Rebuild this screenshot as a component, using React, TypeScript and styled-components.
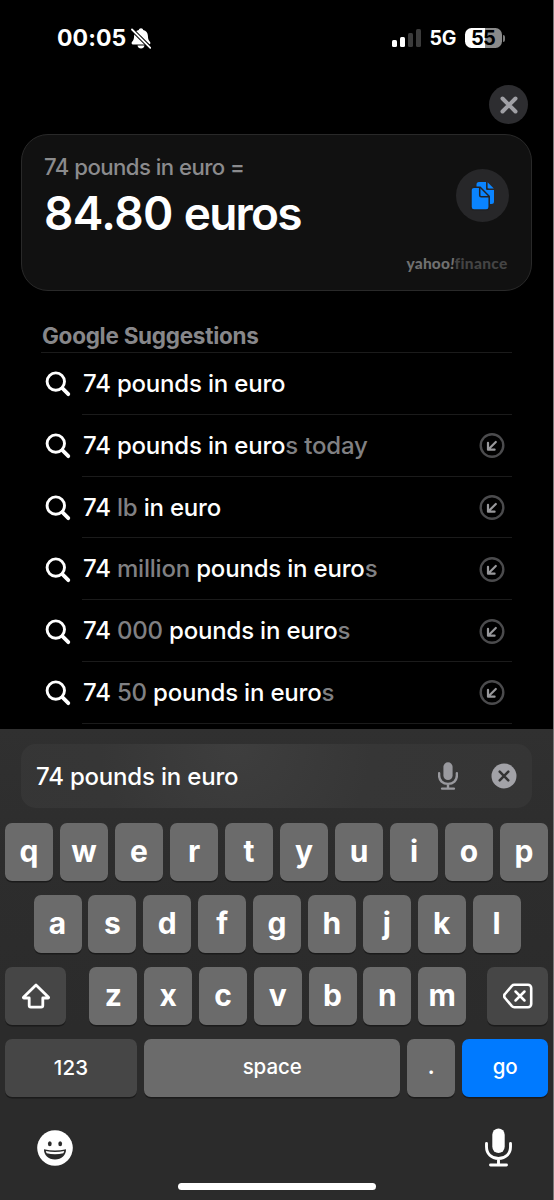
import React from "react";
import styled, { createGlobalStyle } from "styled-components";

const GlobalStyle = createGlobalStyle`
  * { box-sizing: border-box; }
  body { margin: 0; background: #000; }
`;

const Screen = styled.main`
  display: flex;
  flex-direction: column;
  width: 554px;
  height: 1200px;
  overflow: hidden;
  background: #000;
  color: #fff;
  border-right: 1px solid #777;
  font-family: Inter, "Liberation Sans", sans-serif;
  svg { display: block; flex: none; }
`;

const Label = styled.span<{ $size: number; $weight?: number; $spacing?: number; $color?: string }>`
  font-size: ${(p) => p.$size}px;
  font-weight: ${(p) => p.$weight ?? 500};
  letter-spacing: ${(p) => p.$spacing ?? 0}px;
  color: ${(p) => p.$color ?? "#fff"};
  line-height: 1.2;
  white-space: pre;
`;

const StatusBar = styled.header`
  display: flex;
  align-items: center;
  justify-content: space-between;
  height: 76px;
  padding: 1px 48px 0 57px;
`;

const StatusGroup = styled.div<{ $gap: number }>`
  display: flex;
  align-items: center;
  gap: ${(p) => p.$gap}px;
`;

const Signal = styled.div`
  display: flex;
  align-items: flex-end;
  gap: 3px;
  height: 18px;
`;

const SignalBar = styled.i<{ $height: number; $on?: boolean }>`
  width: 5px;
  height: ${(p) => p.$height}px;
  border-radius: 1.5px;
  background: ${(p) => (p.$on ? "#fff" : "#3b3b3b")};
`;

const Battery = styled.div`
  display: flex;
  align-items: center;
  gap: 1px;
`;

const BatteryBody = styled.div`
  display: flex;
  align-items: center;
  justify-content: center;
  width: 37px;
  height: 20px;
  border-radius: 6.5px;
  background: linear-gradient(90deg, #fff 55%, #8a8a8a 55%);
`;

const BatteryTip = styled.i`
  width: 2.5px;
  height: 7px;
  border-radius: 0 3px 3px 0;
  background: #7c7c7c;
`;

const CloseRow = styled.div`
  display: flex;
  justify-content: flex-end;
  height: 58px;
  padding: 9px 25px 0 0;
`;

const RoundButton = styled.button<{ $size: number; $bg: string }>`
  display: flex;
  align-items: center;
  justify-content: center;
  width: ${(p) => p.$size}px;
  height: ${(p) => p.$size}px;
  padding: 0;
  border: 0;
  border-radius: 50%;
  background: ${(p) => p.$bg};
`;

const ResultCard = styled.section`
  display: flex;
  justify-content: space-between;
  height: 157px;
  margin: 0 21px;
  padding: 18.5px 22px 0 22px;
  border: 1.5px solid #292929;
  border-radius: 27px;
  background: #111;
`;

const ResultText = styled.div`
  display: flex;
  flex-direction: column;
  gap: 6px;
`;

const ResultSide = styled.div`
  display: flex;
  flex-direction: column;
  align-items: flex-end;
  gap: 31.5px;
  padding-top: 15.5px;
`;

const Attribution = styled.div`
  display: flex;
  align-items: baseline;
  height: 20px;
  margin-right: 1.5px;
  span { font-family: Lato, Inter, sans-serif; font-weight: 900; }
  em { font-style: italic; }
`;

const Suggestions = styled.section`
  display: flex;
  flex-direction: column;
  height: 438px;
  padding: 31px 41px 0 41px;
`;

const SuggestionsHeader = styled.div`
  display: flex;
  height: 31px;
  flex: none;
  padding-left: 1px;
  border-bottom: 1px solid #1b1b1b;
`;

const SuggestionRow = styled.div`
  display: flex;
  flex: none;
  height: 61.8px;
`;

const SearchCell = styled.div`
  display: flex;
  align-items: center;
  width: 41px;
  padding: 1px 0 0 4px;
`;

const SuggestionBody = styled.div`
  display: flex;
  flex: 1;
  align-items: center;
  justify-content: space-between;
  padding: 2px 7px 0 1px;
  border-bottom: 1px solid #1b1b1b;
`;

const Muted = styled.span`
  color: #808083;
`;

const KeyboardPanel = styled.section`
  display: flex;
  flex-direction: column;
  flex: 1;
  background: linear-gradient(180deg, #303030 0, #2d2d2d 130px, #2b2b2b 300px);
`;

const SearchField = styled.div`
  display: flex;
  flex: none;
  align-items: center;
  height: 64px;
  margin: 15px 21px 15px 21px;
  padding: 0 15px;
  border-radius: 15px;
  background: radial-gradient(circle at 42% 0, #3e3e3e 0, #363636 45%, #353535 100%);
`;

const FieldText = styled.div`
  flex: 1;
  padding-top: 2px;
`;

const ClearSlot = styled.div`
  margin-left: 33.5px;
`;

const Keys = styled.div`
  display: flex;
  flex-direction: column;
  gap: 14px;
  padding: 0 5px;
`;

const KeyRow = styled.div<{ $inset?: number; $between?: boolean }>`
  display: flex;
  gap: 6.9px;
  justify-content: ${(p) => (p.$between ? "space-between" : "flex-start")};
  padding: 0 ${(p) => p.$inset ?? 0}px;
`;

const KeyGroup = styled.div`
  display: flex;
  gap: 6.8px;
  padding-left: 2.5px;
`;

const Key = styled.button<{ $width?: number; $tone?: "dark" | "blue"; $lift?: number }>`
  display: flex;
  flex: none;
  align-items: center;
  justify-content: center;
  width: ${(p) => p.$width ?? 48}px;
  height: 58px;
  padding: 0 0 ${(p) => p.$lift ?? 0}px;
  border: 0;
  border-radius: 7px;
  font-family: inherit;
  background: ${(p) => (p.$tone === "dark" ? "#464646" : p.$tone === "blue" ? "#007aff" : "#6b6b6b")};
  box-shadow: 0 1.5px 0 #1b1b1b;
`;

const BottomBar = styled.div`
  display: flex;
  align-items: flex-start;
  justify-content: space-between;
  height: 86px;
  padding: 31px 41px 0 37px;
`;

const EmojiSlot = styled.div`
  padding-top: 2px;
`;

const HomeIndicator = styled.div`
  flex: none;
  width: 198px;
  height: 7px;
  margin: 0 0 0 178px;
  border-radius: 4px;
  background: #fff;
`;

const BellOff = () => (
  <svg width="20" height="21" viewBox="0 0 20 21">
    <path d="M10 .3c1.200 0 2 .7 2.200 1.700 2.900.8 4.600 2.900 4.700 5.700.1 3.400.7 4.500 2 6 .9.900.6 2.700-.9 2.700H2c-1.500 0-1.800-1.800-.9-2.700 1.300-1.500 1.900-2.600 2-6C3.200 4.900 4.900 2.800 7.800 2 8 1 8.800.3 10 .3Z" fill="#fff" />
    <path d="M6.500 17.500h7c-.3 1.900-1.700 3-3.500 3s-3.200-1.100-3.500-3Z" fill="#fff" />
    <path d="M1 1.500 19.300 19.800" stroke="#000" strokeWidth="3.800" />
    <path d="M1 1.500 19.300 19.800" stroke="#fff" strokeWidth="1.800" strokeLinecap="round" />
  </svg>
);

const CloseIcon = () => (
  <svg width="18" height="18" viewBox="0 0 18 18">
    <path d="m2.500 2.500 13 13M15.500 2.500 2.500 15.500" stroke="#a0a0a5" strokeWidth="4" strokeLinecap="round" />
  </svg>
);

const CopyIcon = () => (
  <svg width="26" height="30" viewBox="0 0 26 30">
    <path d="M9 1h7v6.500c0 1 .6 1.500 1.500 1.500H24v11.500a2.500 2.500 0 0 1-2.500 2.500H9a2.500 2.500 0 0 1-2.500-2.500v-17A2.500 2.500 0 0 1 9 1Z" fill="#0a84ff" />
    <path d="m17.600 1.200 6.200 6.200h-5c-.8 0-1.200-.4-1.200-1.200Z" fill="#0a84ff" />
    <path d="M4 6.200h6.200l9 9V26a3 3 0 0 1-3 3H4a3 3 0 0 1-3-3V9.200a3 3 0 0 1 3-3Z" fill="#0a84ff" stroke="#232325" strokeWidth="1.500" />
    <path d="M9.700 6.500v7.700c0 1 .5 1.500 1.500 1.500H19" fill="none" stroke="#232325" strokeWidth="1.500" />
  </svg>
);

const SearchIcon = () => (
  <svg width="26" height="26" viewBox="0 0 26 26">
    <circle cx="10.800" cy="10.600" r="8.700" fill="none" stroke="#fff" strokeWidth="2.900" />
    <path d="m17.300 17.200 6 6" stroke="#fff" strokeWidth="3.800" strokeLinecap="round" />
  </svg>
);

const FillIcon = () => (
  <svg width="26" height="26" viewBox="0 0 26 26">
    <circle cx="13" cy="12.500" r="11.300" fill="none" stroke="#4b4b4d" strokeWidth="2.400" />
    <path d="M16.800 9 9.500 16.200M9 9.800v6.900h6.600" fill="none" stroke="#98989b" strokeWidth="2.200" strokeLinecap="round" strokeLinejoin="round" />
  </svg>
);

const MicIcon = ({ width, height, color, line = 2.9 }: { width: number; height: number; color: string; line?: number }) => (
  <svg width={width} height={height} viewBox="0 0 27 39" preserveAspectRatio="none">
    <rect x="7.300" y=".5" width="12.400" height="24.500" rx="6.200" fill={color} />
    <path d="M1.500 15.500v3.300C1.500 25.800 6.400 30.500 13.500 30.500s12-4.700 12-11.700v-3.300M13.500 30.500v6M5.500 37h16" fill="none" stroke={color} strokeWidth={line} strokeLinecap="round" />
  </svg>
);

const ClearIcon = () => (
  <svg width="26" height="26" viewBox="0 0 26 26">
    <circle cx="13" cy="13" r="12.500" fill="#a2a2a7" />
    <path d="m8.700 8.700 8.600 8.600m0-8.600-8.600 8.600" stroke="#333" strokeWidth="2.500" strokeLinecap="round" />
  </svg>
);

const ShiftIcon = () => (
  <svg width="30" height="26" viewBox="0 0 30 26">
    <path d="M15 2 2.500 14.200c-.3.300-.2.800.3.800h5.400v7.500c0 1 .6 1.600 1.600 1.600h10.400c1 0 1.600-.6 1.600-1.600V15h5.400c.5 0 .6-.5.3-.8Z" fill="none" stroke="#fff" strokeWidth="2.800" strokeLinejoin="round" />
  </svg>
);

const DeleteIcon = () => (
  <svg width="30" height="26" viewBox="0 0 30 26">
    <path d="M11.300 1.800H25a3.200 3.200 0 0 1 3.200 3.200v16a3.200 3.200 0 0 1-3.200 3.200H11.300c-1 0-1.700-.3-2.400-1L2 15c-1.200-1.300-1.200-2.700 0-4L8.900 2.800c.7-.7 1.400-1 2.400-1Z" fill="none" stroke="#fff" strokeWidth="2.600" />
    <path d="m12.500 8.500 9 9m0-9-9 9" stroke="#fff" strokeWidth="2.500" strokeLinecap="round" />
  </svg>
);

const EmojiIcon = () => (
  <svg width="36" height="36" viewBox="0 0 36 36">
    <circle cx="18" cy="18" r="17.800" fill="#fff" />
    <ellipse cx="12.800" cy="13.800" rx="1.900" ry="2.500" fill="#2b2b2b" />
    <ellipse cx="23.200" cy="13.800" rx="1.900" ry="2.500" fill="#2b2b2b" />
    <path d="M7 19.300c7 1.700 15 1.700 22 0 .2 5.900-4.300 10.300-11 10.300S6.800 25.200 7 19.300Z" fill="#2b2b2b" />
    <path d="M8.800 21c6 1.200 12.400 1.200 18.400 0-.2.900-.5 1.700-.9 2.300-5.200 1.300-11.400 1.300-16.600 0-.4-.7-.7-1.500-.9-2.300Z" fill="#fff" />
  </svg>
);

type Part = { text: string; muted?: boolean };

const suggestions: Part[][] = [
  [{ text: "74 pounds in euro" }],
  [{ text: "74 pounds in euro" }, { text: "s today", muted: true }],
  [{ text: "74 " }, { text: "lb", muted: true }, { text: " in euro" }],
  [{ text: "74 " }, { text: "million", muted: true }, { text: " pounds in euro" }, { text: "s", muted: true }],
  [{ text: "74 " }, { text: "000", muted: true }, { text: " pounds in euro" }, { text: "s", muted: true }],
  [{ text: "74 " }, { text: "50", muted: true }, { text: " pounds in euro" }, { text: "s", muted: true }],
];

const Letter = ({ char }: { char: string }) => (
  <Key $lift={3}>
    <Label $size={30} $weight={700}>{char}</Label>
  </Key>
);

export default function App() {
  return (
    <Screen>
      <GlobalStyle />
      <StatusBar>
        <StatusGroup $gap={4.5}>
          <Label $size={23} $weight={750} $spacing={0.1}>00:05</Label>
          <BellOff />
        </StatusGroup>
        <StatusGroup $gap={8.5}>
          <Signal>
            <SignalBar $height={7} $on />
            <SignalBar $height={10} $on />
            <SignalBar $height={14} />
            <SignalBar $height={18} />
          </Signal>
          <Label $size={19.5} $weight={650} $spacing={-0.3}>5G</Label>
          <Battery>
            <BatteryBody>
              <Label $size={20} $weight={700} $spacing={-0.7} $color="#000">55</Label>
            </BatteryBody>
            <BatteryTip />
          </Battery>
        </StatusGroup>
      </StatusBar>
      <CloseRow>
        <RoundButton $size={39} $bg="#2d2d30" aria-label="Close">
          <CloseIcon />
        </RoundButton>
      </CloseRow>
      <ResultCard>
        <ResultText>
          <Label $size={22.2} $weight={550} $spacing={-0.55} $color="#8b8b8d">74 pounds in euro =</Label>
          <div>
            <Label $size={46} $weight={600} $spacing={-0.6}>84.80 </Label>
            <Label $size={46} $weight={600} $spacing={-1.8}>euros</Label>
          </div>
        </ResultText>
        <ResultSide>
          <RoundButton $size={53} $bg="#272729" aria-label="Copy">
            <CopyIcon />
          </RoundButton>
          <Attribution>
            <Label $size={15.5} $spacing={0.2} $color="#707070">yahoo<em>!</em></Label>
            <Label $size={15.5} $spacing={0.3} $color="#444">finance</Label>
          </Attribution>
        </ResultSide>
      </ResultCard>
      <Suggestions>
        <SuggestionsHeader>
          <Label $size={22.5} $weight={700} $spacing={-0.27} $color="#87878a">Google Suggestions</Label>
        </SuggestionsHeader>
        {suggestions.map((parts, index) => (
          <SuggestionRow key={index}>
            <SearchCell>
              <SearchIcon />
            </SearchCell>
            <SuggestionBody>
              <Label $size={24} $weight={550} $spacing={-0.19}>
                {parts.map((part, i) => (part.muted ? <Muted key={i}>{part.text}</Muted> : part.text))}
              </Label>
              {index > 0 && <FillIcon />}
            </SuggestionBody>
          </SuggestionRow>
        ))}
      </Suggestions>
      <KeyboardPanel>
        <SearchField>
          <FieldText>
            <Label $size={24} $weight={550} $spacing={-0.19}>74 pounds in euro</Label>
          </FieldText>
          <MicIcon width={20} height={28} color="#99999e" line={3.3} />
          <ClearSlot>
            <ClearIcon />
          </ClearSlot>
        </SearchField>
        <Keys>
          <KeyRow $between>
            {[..."qwertyuiop"].map((c) => <Letter key={c} char={c} />)}
          </KeyRow>
          <KeyRow $inset={28.5}>
            {[..."asdfghjkl"].map((c) => <Letter key={c} char={c} />)}
          </KeyRow>
          <KeyRow $between>
            <Key $width={61} $tone="dark" aria-label="Shift"><ShiftIcon /></Key>
            <KeyGroup>
              {[..."zxcvbnm"].map((c) => <Letter key={c} char={c} />)}
            </KeyGroup>
            <Key $width={61} $tone="dark" aria-label="Delete"><DeleteIcon /></Key>
          </KeyRow>
          <KeyRow>
            <Key $width={132} $tone="dark"><Label $size={20.5} $spacing={0.2}>123</Label></Key>
            <Key $width={256.5} $lift={2}><Label $size={20.5} $weight={550} $spacing={-0.1}>space</Label></Key>
            <Key $width={48} $lift={1}><Label $size={20.5} $weight={700}>.</Label></Key>
            <Key $width={86} $tone="blue" $lift={2}><Label $size={20.5} $weight={550}>go</Label></Key>
          </KeyRow>
        </Keys>
        <BottomBar>
          <EmojiSlot>
            <EmojiIcon />
          </EmojiSlot>
          <MicIcon width={27} height={39} color="#fff" />
        </BottomBar>
        <HomeIndicator />
      </KeyboardPanel>
    </Screen>
  );
}
